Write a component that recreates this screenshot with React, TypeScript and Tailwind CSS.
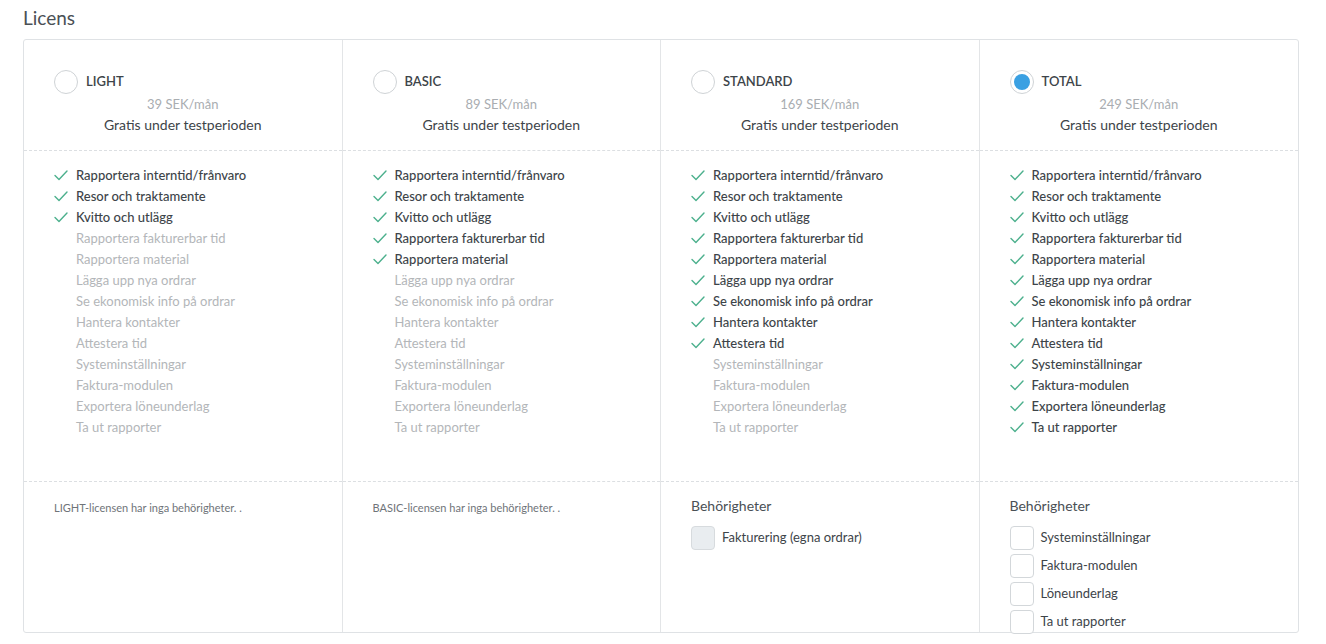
import React from 'react';

const features = [
  'Rapportera interntid/frånvaro',
  'Resor och traktamente',
  'Kvitto och utlägg',
  'Rapportera fakturerbar tid',
  'Rapportera material',
  'Lägga upp nya ordrar',
  'Se ekonomisk info på ordrar',
  'Hantera kontakter',
  'Attestera tid',
  'Systeminställningar',
  'Faktura-modulen',
  'Exportera löneunderlag',
  'Ta ut rapporter',
];

type Plan = {
  name: string;
  price: string;
  included: number;
  selected?: boolean;
  note?: string;
  perms?: { label: string; disabled?: boolean }[];
};

const plans: Plan[] = [
  { name: 'LIGHT', price: '39 SEK/mån', included: 3, note: 'LIGHT-licensen har inga behörigheter. .' },
  { name: 'BASIC', price: '89 SEK/mån', included: 5, note: 'BASIC-licensen har inga behörigheter. .' },
  { name: 'STANDARD', price: '169 SEK/mån', included: 9, perms: [{ label: 'Fakturering (egna ordrar)', disabled: true }] },
  {
    name: 'TOTAL',
    price: '249 SEK/mån',
    included: 13,
    selected: true,
    perms: [
      { label: 'Systeminställningar' },
      { label: 'Faktura-modulen' },
      { label: 'Löneunderlag' },
      { label: 'Ta ut rapporter' },
    ],
  },
];

function Check() {
  return (
    <svg width="14" height="11" viewBox="0 0 14 11" fill="none" className="shrink-0">
      <path d="M1 5.5 L5 9.5 L13 1" stroke="#4cb08d" strokeWidth="1.4" strokeLinecap="round" strokeLinejoin="round" />
    </svg>
  );
}

function PlanColumn({ plan, last }: { plan: Plan; last: boolean }) {
  return (
    <div className={`flex flex-col min-h-0 ${last ? '' : 'border-r border-[#e3e5e7]'}`}>
      {/* header */}
      <div className="h-[111px] shrink-0 px-[30px] pt-[30px] border-b border-dashed border-[#dcdfe2]">
        <div className="flex items-center gap-[8px]">
          <span className="w-[24px] h-[24px] rounded-full border border-[#cfd3d6] bg-white flex items-center justify-center">
            {plan.selected && <span className="w-[16px] h-[16px] rounded-full bg-[#3aa0e2]" />}
          </span>
          <span className="text-[13px] font-semibold text-[#3d4449]">{plan.name}</span>
        </div>
        <div className="text-center text-[13px] text-[#a9adb1] leading-[18px] mt-[1px]">{plan.price}</div>
        <div className="text-center text-[14px] text-[#3d4449] leading-[20px] mt-[2px]">Gratis under testperioden</div>
      </div>
      {/* features */}
      <div className="h-[331px] shrink-0 px-[30px] pt-[14px] border-b border-dashed border-[#dcdfe2]">
        {features.map((f, i) => {
          const on = i < plan.included;
          return (
            <div key={f} className="flex items-center h-[21px]">
              <span className="w-[22px] flex">{on && <Check />}</span>
              <span className={`text-[13px] ${on ? 'text-[#3d4449] font-medium' : 'text-[#b3b6b9]'}`}>{f}</span>
            </div>
          );
        })}
      </div>
      {/* permissions */}
      <div className="flex-1 px-[30px] pt-[15px]">
        {plan.note ? (
          <div className="text-[11px] text-[#6f7479] leading-[18px] mt-[2px]">{plan.note}</div>
        ) : (
          <>
            <div className="text-[14px] text-[#4a5055] leading-[18px] mb-[11px]">Behörigheter</div>
            <div className="flex flex-col gap-[4px]">
              {plan.perms?.map((p) => (
                <div key={p.label} className="flex items-center gap-[7px]">
                  <span
                    className={`w-[24px] h-[24px] rounded-[4px] border ${
                      p.disabled ? 'bg-[#e9edf0] border-[#d7dbde]' : 'bg-white border-[#d3d7da]'
                    }`}
                  />
                  <span className="text-[13px] text-[#3d4449]">{p.label}</span>
                </div>
              ))}
            </div>
          </>
        )}
      </div>
    </div>
  );
}

export default function App() {
  return (
    <div className="w-[1326px] h-[644px] bg-white px-[23px] pt-[5px] overflow-hidden" style={{ fontFamily: 'Lato, "Noto Sans", sans-serif' }}>
      <h1 className="text-[19px] text-[#4a5055] leading-[26px] mb-[8px]">Licens</h1>
      <div className="w-[1276px] h-[594px] border border-[#dfe2e5] rounded-[3px] grid grid-cols-4 grid-rows-[592px]">
        {plans.map((p, i) => (
          <PlanColumn key={p.name} plan={p} last={i === plans.length - 1} />
        ))}
      </div>
    </div>
  );
}
